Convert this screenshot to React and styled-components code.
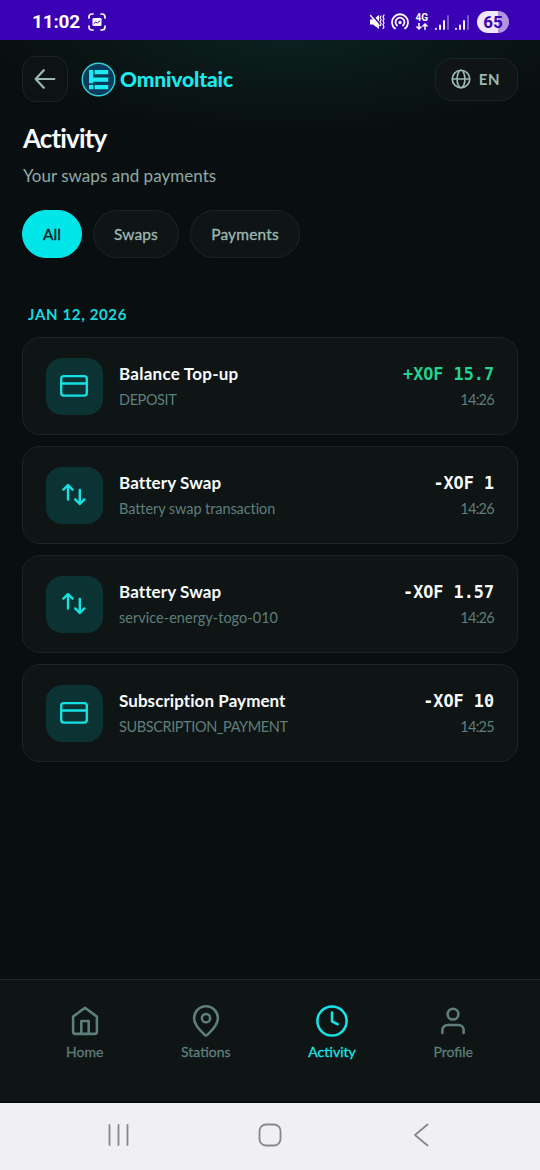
import React from 'react';
import styled, { createGlobalStyle } from 'styled-components';

const GlobalStyle = createGlobalStyle`
    * {
        box-sizing: border-box;
    }

    body {
        margin: 0;
        background: #090f10;
    }

    button {
        font-family: inherit;
    }
`;

const Screen = styled.div`
    width: 540px;
    height: 1170px;
    display: flex;
    flex-direction: column;
    overflow: hidden;
    background: radial-gradient(ellipse 300px 100px at 290px 32px, #0b2220 0%, #0a1817 50%, #090f10 100%);
    font-family: Lato, sans-serif;
`;

const StatusBar = styled.div`
    height: 40px;
    flex: none;
    display: flex;
    align-items: center;
    justify-content: space-between;
    padding: 4px 31px 0 32px;
    background: #3a00b3;
    color: #fff;
`;

const StatusGroup = styled.div`
    display: flex;
    align-items: center;
    gap: ${props => props.$gap}px;
`;

const Clock = styled.span`
    width: 48px;
    font: 700 19px/24px Roboto, sans-serif;
    letter-spacing: -0.2px;
    white-space: nowrap;
`;

const Battery = styled.span`
    width: 32px;
    height: 22px;
    margin-left: 2px;
    border-radius: 11px;
    background: linear-gradient(90deg, #efe8fa 0 65%, #b494e2 65%);
    color: #3a00b3;
    font: 700 17px/22px Roboto, sans-serif;
    text-align: center;
`;

const Header = styled.header`
    height: 78px;
    flex: none;
    display: flex;
    align-items: center;
    padding: 0 22px;
`;

const BackButton = styled.button`
    width: 46px;
    height: 46px;
    display: flex;
    align-items: center;
    justify-content: center;
    padding: 0;
    border: 1px solid #1c2424;
    border-radius: 14px;
    background: #0d1314;
    color: #9db8b3;
`;

const Brand = styled.div`
    display: flex;
    align-items: center;
    gap: 4px;
    margin-left: 13px;
    color: #1ce9ed;
`;

const Language = styled.button`
    width: 83px;
    height: 43px;
    margin-left: auto;
    display: flex;
    align-items: center;
    justify-content: center;
    gap: 8px;
    padding: 0 2px 0 0;
    border: 1px solid #1c2424;
    border-radius: 17px;
    background: #0f1415;
    color: #9db8b3;
`;

const Content = styled.main`
    flex: 1;
    padding: 0 22px;
`;

const Label = styled.span`
    display: block;
    font-size: ${props => props.$size}px;
    line-height: ${props => props.$line || 20}px;
    font-weight: ${props => props.$weight || 400};
    letter-spacing: ${props => props.$track || 0}px;
    color: ${props => props.$color || 'inherit'};
    -webkit-text-stroke: ${props => props.$medium ? '0.3px currentColor' : '0'};
    white-space: nowrap;
`;

const Intro = styled.div`
    display: flex;
    flex-direction: column;
    gap: 11px;
    padding: 4px 0 0 1px;
`;

const Filters = styled.div`
    display: flex;
    gap: 11px;
    margin-top: 23px;
`;

const Chip = styled.button`
    width: ${props => props.$width}px;
    height: 48px;
    display: flex;
    align-items: center;
    justify-content: center;
    padding: 0 0 1px;
    border: 1px solid ${props => props.$active ? '#00e5e8' : '#1c2424'};
    border-radius: 24px;
    background: ${props => props.$active ? '#00e5e8' : '#0f1415'};
    color: ${props => props.$active ? '#0a1516' : '#9db8b3'};
`;

const DateHeading = styled.div`
    margin: 46px 0 13px 6px;
`;

const List = styled.div`
    display: flex;
    flex-direction: column;
    gap: 11px;
`;

const Card = styled.div`
    height: 98px;
    display: flex;
    align-items: center;
    padding: 0 23px;
    border: 1px solid #1b2526;
    border-radius: 18px;
    background: #0f1415;
`;

const IconTile = styled.div`
    width: 57px;
    height: 57px;
    flex: none;
    display: flex;
    align-items: center;
    justify-content: center;
    margin-right: 16px;
    padding-right: 1px;
    border-radius: 16px;
    background: #0c3333;
    color: #16e1e3;
`;

const Details = styled.div`
    flex: 1;
    display: flex;
    flex-direction: column;
    gap: 6px;
    padding-top: 2px;
`;

const Totals = styled(Details)`
    align-items: flex-end;
`;

const Amount = styled.span`
    color: ${props => props.$credit ? '#22d391' : '#f8fcfc'};
    font: 700 16.8px/20px 'DejaVu Sans Mono', monospace;
    white-space: pre;
`;

const TabBar = styled.nav`
    height: 124px;
    flex: none;
    display: flex;
    justify-content: space-between;
    padding: 24px 67px 0 66px;
    border-top: 1px solid #222b2c;
    border-bottom: 2px solid #080e0f;
    background: #0f1415;
`;

const Tab = styled.div`
    display: flex;
    flex-direction: column;
    align-items: center;
    gap: 4px;
    color: ${props => props.$active ? '#16e5e7' : '#5d7f7b'};
`;

const SystemNav = styled.div`
    height: 67px;
    flex: none;
    display: flex;
    align-items: center;
    justify-content: space-between;
    padding: 0 111px 3px 107px;
    background: #f0f0f3;
    color: #88888b;
`;

const HomeKey = styled.div`
    height: 24px;
    margin-right: 5px;
`;

const Icon = ({ size = 24, width, box = '0 0 24 24', stroke = 2, children }) => (
    <svg
        width={width || size}
        height={size}
        viewBox={box}
        fill="none"
        stroke="currentColor"
        strokeWidth={stroke}
        strokeLinecap="round"
        strokeLinejoin="round"
    >
        {children}
    </svg>
);

const CardIcon = () => (
    <Icon size={28} box="0 0 28 28" stroke={2.3}>
        <rect x="1.2" y="4.2" width="25.6" height="19.4" rx="2.6" />
        <path d="M1.2 11.5h25.6" />
    </Icon>
);

const SwapIcon = () => (
    <Icon size={24} stroke={2.4}>
        <path d="M6 16.5V2.2M1.4 6.6 6 2l4.6 4.6M17.8 7v14M13.2 16.4l4.6 4.6 4.6-4.6" />
    </Icon>
);

const Signal = () => (
    <Icon size={16} width={14} box="0 0 14 16" stroke={1.9}>
        <path d="M1 15v-.3M5 15v-3.5M9 15V7" />
        <path d="M13 15V2" opacity=".35" />
    </Icon>
);

const transactions = [
    { title: 'Balance Top-up', sub: 'DEPOSIT', amount: '+XOF 15.7', time: '14:26', card: true, credit: true, titleTrack: 0.25, subTrack: -0.4 },
    { title: 'Battery Swap', sub: 'Battery swap transaction', amount: '-XOF 1', time: '14:26', titleTrack: 0.1, subTrack: -0.08 },
    { title: 'Battery Swap', sub: 'service-energy-togo-010', amount: '-XOF 1.57', time: '14:26', titleTrack: 0.1, subTrack: 0.02 },
    { title: 'Subscription Payment', sub: 'SUBSCRIPTION_PAYMENT', amount: '-XOF 10', time: '14:25', card: true, titleTrack: 0.07, subTrack: -0.4 }
];

const Transaction = ({ item }) => (
    <Card>
        <IconTile>{item.card ? <CardIcon /> : <SwapIcon />}</IconTile>
        <Details>
            <Label $size={17} $weight={700} $track={item.titleTrack} $color="#f8fcfc">{item.title}</Label>
            <Label $size={14.5} $track={item.subTrack} $color="#5d7f7b">{item.sub}</Label>
        </Details>
        <Totals>
            <Amount $credit={item.credit}>{item.amount}</Amount>
            <Label $size={14.5} $track={-0.7} $color="#5d7f7b">{item.time}</Label>
        </Totals>
    </Card>
);

const App = () => {
    return (
        <>
            <GlobalStyle />
            <Screen>
                <StatusBar>
                    <StatusGroup $gap={8}>
                        <Clock>11:02</Clock>
                        <Icon size={18} box="0 0 18 18" stroke={1.7}>
                            <path d="M1 5V4q0-3 3-3h1M13 1h1q3 0 3 3v1M17 13v1q0 3-3 3h-1M5 17H4q-3 0-3-3v-1" />
                            <rect x="4.5" y="5" width="9" height="8" rx="1.3" fill="#fff" stroke="none" />
                            <path d="m6 10.5 1.8-1.5 1.5 1L12 7.8" stroke="#3a00b3" strokeWidth="1" />
                        </Icon>
                    </StatusGroup>
                    <StatusGroup $gap={6}>
                        <Icon size={16} box="0 0 16 16" stroke={1.5}>
                            <path d="M1 5.5h3L10 1v14l-6-4.5H1z" fill="currentColor" stroke="none" />
                            <path d="M3.2 1 10.5 9.5" stroke="#3a00b3" strokeWidth="1.5" />
                            <path d="m1.5 1.5 8.5 10" strokeWidth="1.4" />
                            <path d="m12 2-1 1.8 1.2 2-1.2 2 1.2 2-1 1.8M15 1l-1 2 1 2-1 2 1 2-1 2 1 2-1 1.5" strokeWidth="1.2" />
                        </Icon>
                        <Icon size={18} box="0 0 18 18" stroke={1.8}>
                            <path d="M4 15.5a8 8 0 1 1 10 0M6 12.5a4.5 4.5 0 1 1 6 0" />
                            <circle cx="9" cy="9.5" r="1.7" fill="currentColor" stroke="none" />
                        </Icon>
                        <svg width="14" height="18" viewBox="0 0 14 18" fill="none" stroke="currentColor" strokeWidth="1.5">
                            <text x="0.5" y="8" fill="currentColor" stroke="none" fontFamily="Roboto" fontSize="10" fontWeight="700">4G</text>
                            <path d="M4 10v6M1.5 13.5 4 16l2.5-2.5M10 17v-6M7.5 13.5 10 11l2.5 2.5" />
                        </svg>
                        <Signal />
                        <Signal />
                        <Battery>65</Battery>
                    </StatusGroup>
                </StatusBar>
                <Header>
                    <BackButton aria-label="Back">
                        <Icon size={28} stroke={1.9}>
                            <path d="M20 12H4.5M11 4.5 4 12l7 7.5" />
                        </Icon>
                    </BackButton>
                    <Brand>
                        <svg width="35" height="35" viewBox="0 0 35 35">
                            <circle cx="17.5" cy="17.5" r="16.3" fill="#073b5c" stroke="#35cdd3" strokeWidth="1.4" />
                            <path d="M8 8h4.3v13.3H8zM8 23h4.3v4.2H8zM13.6 8h13.6v4.3H13.6zM12.3 15.4h14.9v4.4H12.3zM13.6 22.9h13.6v4.3H13.6z" fill="#1cecf0" />
                        </svg>
                        <Label $size={21} $weight={900} $line={26} $track={-0.15}>Omnivoltaic</Label>
                    </Brand>
                    <Language>
                        <Icon size={20} stroke={2}>
                            <circle cx="12" cy="12" r="10.5" />
                            <ellipse cx="12" cy="12" rx="4.7" ry="10.5" />
                            <path d="M2 12h20" />
                        </Icon>
                        <Label $size={15} $weight={700} $track={0.7}>EN</Label>
                    </Language>
                </Header>
                <Content>
                    <Intro>
                        <Label $size={26} $line={32} $weight={700} $color="#f8fcfc" $track={-0.85}>Activity</Label>
                        <Label $size={17} $line={22} $color="#8eaaa5" $track={0.03}>Your swaps and payments</Label>
                    </Intro>
                    <Filters>
                        <Chip $width={60} $active><Label $size={15.5} $medium>All</Label></Chip>
                        <Chip $width={86}><Label $size={15.5} $medium $track={0.1}>Swaps</Label></Chip>
                        <Chip $width={110}><Label $size={15.5} $medium $track={0.15}>Payments</Label></Chip>
                    </Filters>
                    <DateHeading>
                        <Label $size={15} $weight={700} $track={0.65} $color="#16d9dc">JAN 12, 2026</Label>
                    </DateHeading>
                    <List>
                        {transactions.map((item, i) => <Transaction key={i} item={item} />)}
                    </List>
                </Content>
                <TabBar>
                    <Tab>
                        <Icon size={34} stroke={1.8}>
                            <path d="M3.6 8.9 12 2.7l8.4 6.2V19.6q0 1.5-1.5 1.5H5.1q-1.5 0-1.5-1.5zM9.4 21V12h5.2v9" />
                        </Icon>
                        <Label $size={14} $medium>Home</Label>
                    </Tab>
                    <Tab>
                        <Icon size={34} stroke={1.8}>
                            <path d="M20.4 10c0 5.5-5.8 9.8-7.5 11.8q-.9.8-1.8 0C9.4 19.8 3.6 15.5 3.6 10a8.4 8.4 0 0 1 16.8 0Z" />
                            <circle cx="12" cy="10" r="2.9" />
                        </Icon>
                        <Label $size={14} $medium>Stations</Label>
                    </Tab>
                    <Tab $active>
                        <Icon size={34} stroke={1.8}>
                            <circle cx="12" cy="12" r="10.3" />
                            <path d="M12 6v6.3l4 2" />
                        </Icon>
                        <Label $size={14} $medium>Activity</Label>
                    </Tab>
                    <Tab>
                        <Icon size={34} stroke={1.8}>
                            <path d="M19.5 20.5v-2a3.7 3.7 0 0 0-3.7-3.7H8.2a3.7 3.7 0 0 0-3.7 3.7v2" />
                            <circle cx="12" cy="7.2" r="3.8" />
                        </Icon>
                        <Label $size={14} $medium>Profile</Label>
                    </Tab>
                </TabBar>
                <SystemNav>
                    <Icon size={24} stroke={1.8}>
                        <path d="M2.5 2v20M11.5 2v20M20.5 2v20" />
                    </Icon>
                    <HomeKey>
                        <Icon size={24} stroke={1.8}>
                            <rect x="1.5" y="1.5" width="21" height="21" rx="6.5" />
                        </Icon>
                    </HomeKey>
                    <Icon size={24} width={16} box="0 0 16 24" stroke={1.8}>
                        <path d="M14.5 1.5 2 12l12.5 10.5" />
                    </Icon>
                </SystemNav>
            </Screen>
        </>
    );
};

export default App;
